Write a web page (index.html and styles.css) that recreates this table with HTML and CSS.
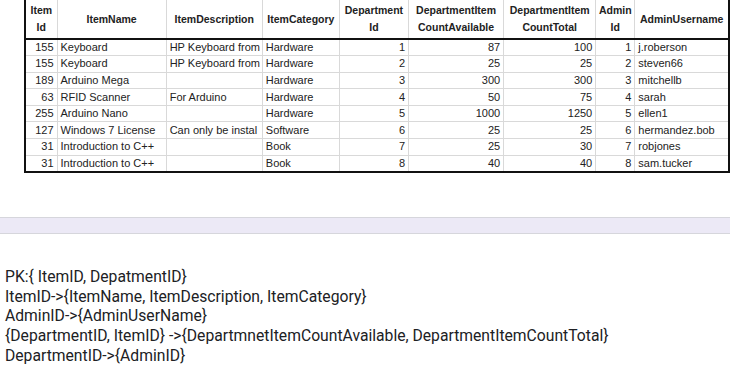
FILE: index.html
```html
<!DOCTYPE html>
<html lang="en">
<head>
  <meta charset="UTF-8">
  <title>Item table</title>
  <link rel="stylesheet" href="styles.css">
</head>
<body>
  <!-- Spreadsheet capture -->
  <div class="sheet">
    <table class="grid">
      <colgroup>
        <col style="width:32px"><col style="width:109px"><col style="width:96px">
        <col style="width:77px"><col style="width:69px"><col style="width:95px">
        <col style="width:92px"><col style="width:39px"><col style="width:94px">
      </colgroup>
      <thead>
        <tr>
          <th>Item<br>Id</th>
          <th>ItemName</th>
          <th>ItemDescription</th>
          <th>ItemCategory</th>
          <th>Department<br>Id</th>
          <th>DepartmentItem<br>CountAvailable</th>
          <th>DepartmentItem<br>CountTotal</th>
          <th>Admin<br>Id</th>
          <th>AdminUsername</th>
        </tr>
      </thead>
      <tbody>
        <tr><td class="num">155</td><td>Keyboard</td><td>HP Keyboard from</td><td>Hardware</td><td class="num">1</td><td class="num">87</td><td class="num">100</td><td class="num">1</td><td>j.roberson</td></tr>
        <tr><td class="num">155</td><td>Keyboard</td><td>HP Keyboard from</td><td>Hardware</td><td class="num">2</td><td class="num">25</td><td class="num">25</td><td class="num">2</td><td>steven66</td></tr>
        <tr><td class="num">189</td><td>Arduino Mega</td><td></td><td>Hardware</td><td class="num">3</td><td class="num">300</td><td class="num">300</td><td class="num">3</td><td>mitchellb</td></tr>
        <tr><td class="num">63</td><td>RFID Scanner</td><td>For Arduino</td><td>Hardware</td><td class="num">4</td><td class="num">50</td><td class="num">75</td><td class="num">4</td><td>sarah</td></tr>
        <tr><td class="num">255</td><td>Arduino Nano</td><td></td><td>Hardware</td><td class="num">5</td><td class="num">1000</td><td class="num">1250</td><td class="num">5</td><td>ellen1</td></tr>
        <tr><td class="num">127</td><td>Windows 7 License</td><td>Can only be instal</td><td>Software</td><td class="num">6</td><td class="num">25</td><td class="num">25</td><td class="num">6</td><td>hermandez.bob</td></tr>
        <tr><td class="num">31</td><td>Introduction to C++</td><td></td><td>Book</td><td class="num">7</td><td class="num">25</td><td class="num">30</td><td class="num">7</td><td>robjones</td></tr>
        <tr><td class="num">31</td><td>Introduction to C++</td><td></td><td>Book</td><td class="num">8</td><td class="num">40</td><td class="num">40</td><td class="num">8</td><td>sam.tucker</td></tr>
      </tbody>
    </table>
  </div>

  <div class="divider"></div>

  <!-- Dependencies -->
  <div class="notes">
    <p>PK:{ ItemID, DepatmentID}</p>
    <p>ItemID-&gt;{ItemName, ItemDescription, ItemCategory}</p>
    <p>AdminID-&gt;{AdminUserName}</p>
    <p>{DepartmentID, ItemID} -&gt;{DepartmnetItemCountAvailable, DepartmentItemCountTotal}</p>
    <p>DepartmentID-&gt;{AdminID}</p>
  </div>
</body>
</html>
```

FILE: styles.css
```css
* {
  margin: 0;
  padding: 0;
  box-sizing: border-box;
}
html, body {
  background: #fff;
  overflow: hidden;
}
body {
  width: 730px;
  height: 365px;
  font-family: Roboto, "Liberation Sans", sans-serif;
}

/* Spreadsheet block */
.sheet {
  padding-left: 24px;
}
.grid {
  width: 706px;
  table-layout: fixed;
  border-collapse: collapse;
  border-left: 2px solid #111;
  border-right: 2px solid #111;
  border-bottom: 2px solid #111;
  font-family: "Liberation Sans", Arial, sans-serif;
  font-size: 11px;
  color: #222;
}
.grid th, .grid td {
  white-space: nowrap;
  overflow: hidden;
  border-right: 1px solid #d9d9d9;
  border-bottom: 1px solid #d9d9d9;
}
.grid th {
  height: 39px;
  padding: 0 1px;
  font-size: 10.5px;
  line-height: 17px;
  font-weight: bold;
  text-align: center;
  vertical-align: middle;
  border-bottom: 2px solid #111;
}
.grid td {
  height: 16.6px;
  padding: 0 3px;
  line-height: 15px;
  text-align: left;
}
.grid td.num {
  text-align: right;
}

/* Gray band between the two blocks */
.divider {
  margin-top: 44px;
  height: 17px;
  background: #ece9f6;
  border-top: 1px solid #d6d6dc;
  border-bottom: 1px solid #d6d6dc;
}

/* Functional dependencies */
.notes {
  padding: 33px 0 0 5px;
  font-size: 15.7px;
  line-height: 19.8px;
  color: #202124;
}
```
